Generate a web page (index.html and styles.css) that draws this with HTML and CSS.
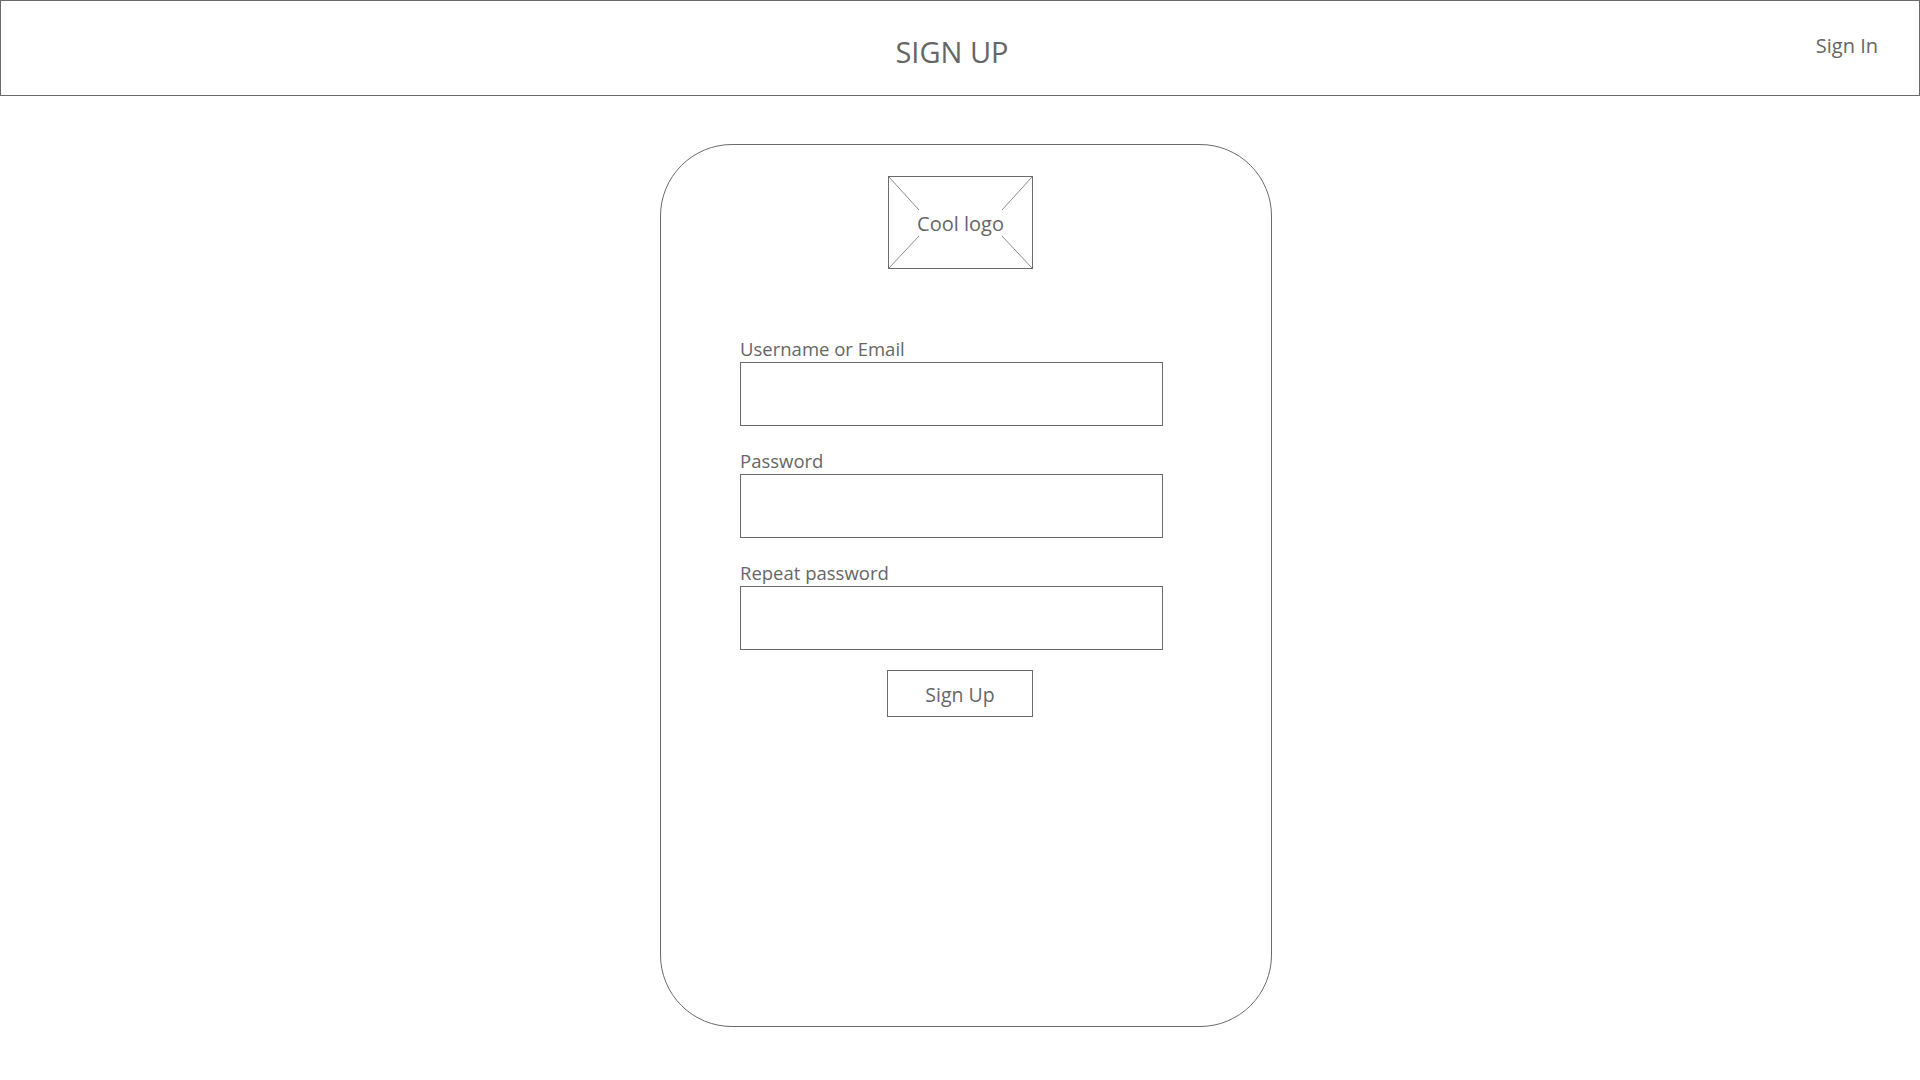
FILE: index.html
```html
<!DOCTYPE html>
<html lang="en">
<head>
<meta charset="utf-8">
<title>Sign Up</title>
<link rel="stylesheet" href="styles.css">
</head>
<body>
<header class="topbar">
  <div class="topbar-spacer"></div>
  <h1 class="topbar-title">SIGN UP</h1>
  <a class="topbar-link" href="#">Sign In</a>
</header>
<main class="page">
  <section class="card">
    <div class="logo">
      <svg class="logo-lines" viewBox="0 0 143 91" width="143" height="91" aria-hidden="true">
        <line x1="0" y1="0" x2="30" y2="33"/>
        <line x1="143" y1="0" x2="113" y2="33"/>
        <line x1="0" y1="91" x2="30" y2="59"/>
        <line x1="143" y1="91" x2="113" y2="59"/>
      </svg>
      <span class="logo-text">Cool logo</span>
    </div>
    <form class="form">
      <div class="field">
        <label class="field-label">Username or Email</label>
        <div class="field-input"></div>
      </div>
      <div class="field">
        <label class="field-label">Password</label>
        <div class="field-input"></div>
      </div>
      <div class="field">
        <label class="field-label">Repeat password</label>
        <div class="field-input"></div>
      </div>
      <div class="button">Sign Up</div>
    </form>
  </section>
</main>
</body>
</html>
```
FILE: styles.css
```css
* { box-sizing: border-box; }
html, body { margin: 0; padding: 0; background: #fff; }
body {
  width: 1920px;
  height: 1080px;
  font-family: "Open Sans", "Noto Sans", sans-serif;
  color: #666;
  overflow: hidden;
}

.topbar {
  height: 96px;
  border: 1px solid #6b6b6b;
  display: grid;
  grid-template-columns: 1fr auto 1fr;
  align-items: start;
  padding-top: 31px;
}
.topbar-title {
  margin: 0 16px 0 0;
  font-size: 29px;
  font-weight: 400;
  line-height: normal;
  color: #666;
}
.topbar-link {
  justify-self: end;
  padding-right: 41px;
  font-size: 20px;
  line-height: normal;
  color: #666;
  text-decoration: none;
}

.page {
  padding: 48px 0 0 660px;
}
.card {
  width: 612px;
  height: 883px;
  border: 1px solid #6b6b6b;
  border-radius: 72px;
  padding: 31px 0 0 79px;
  display: flex;
  flex-direction: column;
}

.logo {
  width: 145px;
  height: 93px;
  margin-left: 148px;
  border: 1px solid #6b6b6b;
  display: grid;
  place-items: center;
}
.logo-lines {
  grid-area: 1 / 1;
  width: 143px;
  height: 91px;
  stroke: #8a8a8a;
  stroke-width: 1;
}
.logo-text {
  grid-area: 1 / 1;
  font-size: 20px;
  padding-top: 2px;
}

.form {
  margin-top: 71px;
  display: flex;
  flex-direction: column;
  gap: 26px;
}
.field {
  display: flex;
  flex-direction: column;
}
.field-label {
  font-size: 18.5px;
  line-height: 20px;
  margin-top: -1px;
  margin-bottom: 3px;
}
.field-input {
  width: 423px;
  height: 64px;
  border: 1px solid #6b6b6b;
}
.button {
  margin: -6px 0 0 147px;
  width: 146px;
  height: 47px;
  border: 1px solid #6b6b6b;
  display: flex;
  align-items: center;
  justify-content: center;
  font-size: 19.5px;
  padding-top: 1px;
}
```
